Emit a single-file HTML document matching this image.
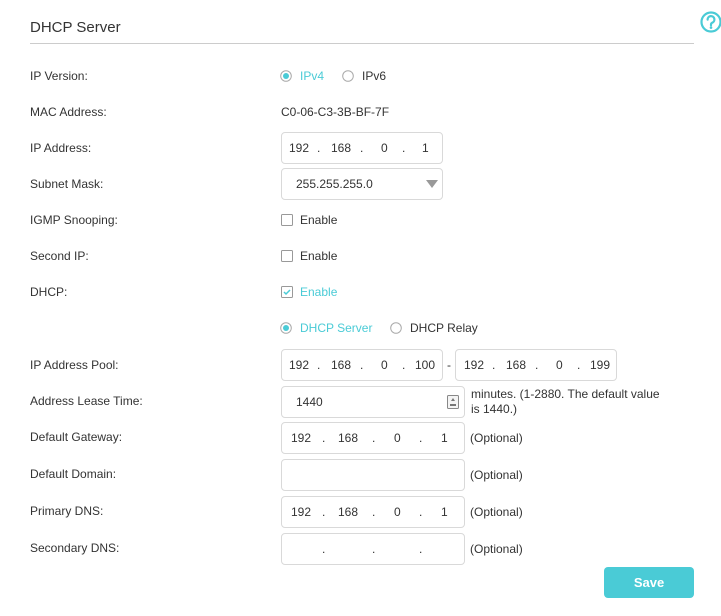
<!DOCTYPE html>
<html><head><meta charset="utf-8"><style>
*{margin:0;padding:0;box-sizing:border-box}
body{width:721px;height:616px;background:#fff;font-family:"Liberation Sans",Arial,sans-serif;font-size:12px;color:#333;position:relative;overflow:hidden}
.a{position:absolute}
.lbl{position:absolute;left:30px;line-height:14px}
.box{position:absolute;height:32px;border:1px solid #d9d9d9;border-radius:4px;background:#fff}
.t{position:absolute;line-height:14px;white-space:nowrap}
.teal{color:#4acbd6}
</style></head><body>
<div class="a" style="left:30px;top:19px;font-size:15px;color:#333">DHCP Server</div>
<div class="a" style="left:30px;top:43px;width:664px;height:1px;background:#ccc"></div>
<svg class="a" style="left:700px;top:11px" width="22" height="22" viewBox="0 0 22 22"><circle cx="11" cy="11" r="9.5" fill="none" stroke="#4acbd6" stroke-width="2.2"/><path d="M7.6 8.6a3.4 3.4 0 1 1 4.6 3.1c-.9.4-1.2.9-1.2 1.8v.8" fill="none" stroke="#4acbd6" stroke-width="2.2" stroke-linecap="round"/><circle cx="11" cy="16.6" r="1.3" fill="#4acbd6"/></svg>

<div class="lbl" style="top:69px">IP Version:</div>
<div class="lbl" style="top:105px">MAC Address:</div>
<div class="lbl" style="top:141px">IP Address:</div>
<div class="lbl" style="top:177px">Subnet Mask:</div>
<div class="lbl" style="top:213px">IGMP Snooping:</div>
<div class="lbl" style="top:249px">Second IP:</div>
<div class="lbl" style="top:285px">DHCP:</div>
<div class="lbl" style="top:358px">IP Address Pool:</div>
<div class="lbl" style="top:394px">Address Lease Time:</div>
<div class="lbl" style="top:430px">Default Gateway:</div>
<div class="lbl" style="top:467px">Default Domain:</div>
<div class="lbl" style="top:504px">Primary DNS:</div>
<div class="lbl" style="top:541px">Secondary DNS:</div>

<!-- IP version radios -->
<svg class="a" style="left:280px;top:70px" width="12" height="12"><circle cx="6" cy="6" r="5.3" fill="#fff" stroke="#aaa"/><circle cx="6" cy="6" r="3" fill="#4acbd6"/></svg>
<div class="t teal" style="left:300px;top:69px">IPv4</div>
<svg class="a" style="left:342px;top:70px" width="12" height="12"><circle cx="6" cy="6" r="5.3" fill="#fff" stroke="#aaa"/></svg>
<div class="t" style="left:362px;top:69px">IPv6</div>

<div class="t" style="left:281px;top:105px">C0-06-C3-3B-BF-7F</div>

<div class="box" style="left:281px;top:132px;width:162px"></div>
<div class="t" style="left:289px;top:141px">192</div><div class="t" style="left:317px;top:141px">.</div><div class="t" style="left:331px;top:141px">168</div><div class="t" style="left:360px;top:141px">.</div><div class="t" style="left:381px;top:141px">0</div><div class="t" style="left:402px;top:141px">.</div><div class="t" style="left:422px;top:141px">1</div>

<div class="box" style="left:281px;top:168px;width:162px"></div>
<div class="t" style="left:296px;top:177px">255.255.255.0</div>
<svg class="a" style="left:426px;top:180px" width="12" height="8"><path d="M0 0h12L6 8z" fill="#999"/></svg>

<svg class="a" style="left:281px;top:214px" width="12" height="12"><rect x=".5" y=".5" width="11" height="11" rx="1" fill="#fff" stroke="#999"/></svg>
<div class="t" style="left:300px;top:213px">Enable</div>
<svg class="a" style="left:281px;top:250px" width="12" height="12"><rect x=".5" y=".5" width="11" height="11" rx="1" fill="#fff" stroke="#999"/></svg>
<div class="t" style="left:300px;top:249px">Enable</div>
<svg class="a" style="left:281px;top:286px" width="12" height="12"><rect x=".5" y=".5" width="11" height="11" rx="1" fill="#fff" stroke="#999"/><path d="M3 6l2 2 4-4" fill="none" stroke="#4acbd6" stroke-width="1.5"/></svg>
<div class="t teal" style="left:300px;top:285px">Enable</div>

<svg class="a" style="left:280px;top:322px" width="12" height="12"><circle cx="6" cy="6" r="5.3" fill="#fff" stroke="#aaa"/><circle cx="6" cy="6" r="3" fill="#4acbd6"/></svg>
<div class="t teal" style="left:300px;top:321px">DHCP Server</div>
<svg class="a" style="left:390px;top:322px" width="12" height="12"><circle cx="6" cy="6" r="5.3" fill="#fff" stroke="#aaa"/></svg>
<div class="t" style="left:410px;top:321px">DHCP Relay</div>

<!-- pool -->
<div class="box" style="left:281px;top:349px;width:162px"></div>
<div class="t" style="left:289px;top:358px">192</div><div class="t" style="left:317px;top:358px">.</div><div class="t" style="left:331px;top:358px">168</div><div class="t" style="left:360px;top:358px">.</div><div class="t" style="left:381px;top:358px">0</div><div class="t" style="left:402px;top:358px">.</div><div class="t" style="left:415px;top:358px">100</div>
<div class="t" style="left:447px;top:358px">-</div>
<div class="box" style="left:455px;top:349px;width:162px"></div>
<div class="t" style="left:464px;top:358px">192</div><div class="t" style="left:492px;top:358px">.</div><div class="t" style="left:506px;top:358px">168</div><div class="t" style="left:535px;top:358px">.</div><div class="t" style="left:556px;top:358px">0</div><div class="t" style="left:577px;top:358px">.</div><div class="t" style="left:590px;top:358px">199</div>

<div class="box" style="left:281px;top:386px;width:184px"></div>
<div class="t" style="left:296px;top:395px">1440</div>
<svg class="a" style="left:447px;top:395px" width="12" height="14"><rect x=".5" y=".5" width="11" height="13" rx="1" fill="#f4f4f4" stroke="#888"/><path d="M4 6l2-3 2 3zM3 9h6v2H3z" fill="#777"/></svg>
<div class="t" style="left:471px;top:387px;line-height:15px">minutes. (1-2880. The default value<br>is 1440.)</div>

<div class="box" style="left:281px;top:422px;width:184px"></div>
<div class="t" style="left:291px;top:431px">192</div><div class="t" style="left:322px;top:431px">.</div><div class="t" style="left:338px;top:431px">168</div><div class="t" style="left:372px;top:431px">.</div><div class="t" style="left:394px;top:431px">0</div><div class="t" style="left:419px;top:431px">.</div><div class="t" style="left:441px;top:431px">1</div>
<div class="t" style="left:470px;top:431px">(Optional)</div>

<div class="box" style="left:281px;top:459px;width:184px"></div>
<div class="t" style="left:470px;top:468px">(Optional)</div>

<div class="box" style="left:281px;top:496px;width:184px"></div>
<div class="t" style="left:291px;top:505px">192</div><div class="t" style="left:322px;top:505px">.</div><div class="t" style="left:338px;top:505px">168</div><div class="t" style="left:372px;top:505px">.</div><div class="t" style="left:394px;top:505px">0</div><div class="t" style="left:419px;top:505px">.</div><div class="t" style="left:441px;top:505px">1</div>
<div class="t" style="left:470px;top:505px">(Optional)</div>

<div class="box" style="left:281px;top:533px;width:184px"></div>
<div class="t" style="left:322px;top:542px">.</div><div class="t" style="left:372px;top:542px">.</div><div class="t" style="left:419px;top:542px">.</div>
<div class="t" style="left:470px;top:542px">(Optional)</div>

<div class="a" style="left:604px;top:567px;width:90px;height:31px;background:#4acbd6;border-radius:4px;color:#fff;font-size:13px;font-weight:bold;text-align:center;line-height:31px">Save</div>
</body></html>
